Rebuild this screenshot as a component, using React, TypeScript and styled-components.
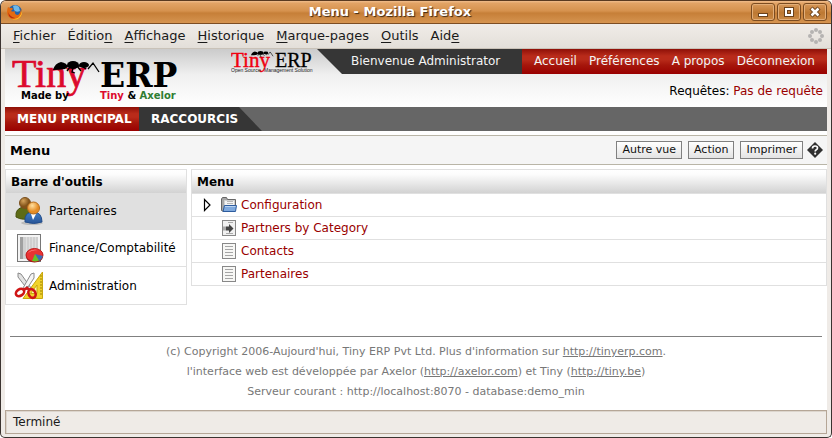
import React from "react";
import styled, { createGlobalStyle } from "styled-components";

const GlobalStyle = createGlobalStyle`
  * { box-sizing: border-box; }
  body { margin: 0; background: #fff; font: 12px "DejaVu Sans", sans-serif; color: #000; }
  button { font: inherit; color: inherit; margin: 0; }
  ul { list-style: none; margin: 0; padding: 0; }
  h1, h2, p { margin: 0; font-size: inherit; }
  svg { display: block; flex: none; }
`;

const redGradient = "linear-gradient(#8e1008 0, #b92b1a 28%, #b92b1a 42%, #a5160b 65%, #990000 100%)";
const panelGradient = "linear-gradient(#fff, #fcfcfc 20%, #d2d2d2)";
const line = "#e0e0e0";

const Window = styled.div`
  display: flex;
  flex-direction: column;
  min-height: 100vh;
  background: #efebe7;
  border: 1px solid #3b3330;
  border-top-color: #5a3a20;
  border-radius: 6px 6px 5px 5px;
  overflow: hidden;
`;
const TitleBar = styled.header`
  display: flex;
  align-items: center;
  height: 23px;
  padding: 0 4px 0 6px;
  color: #fff;
  background: linear-gradient(#f0bd8c 0, #e2a365 10%, #d6924e 45%, #c67f38 55%, #d69450 100%);
  border-bottom: 1px solid #7d4d23;
`;
const Title = styled.h1`
  flex: 1;
  padding-left: 6px;
  text-align: center;
  font-size: 13px;
  line-height: 20px;
  text-shadow: 1px 1px 1px #3d2714;
`;
const WindowButtons = styled.div`
  display: flex;
  gap: 2px;
`;
const WindowButton = styled.button`
  width: 24px;
  height: 18px;
  padding: 0;
  display: grid;
  place-items: center;
  border: 1px solid #7c4c20;
  border-radius: 3px;
  background: linear-gradient(#d8995a, #bd7832 55%, #cb8a47);
  box-shadow: inset 0 0 0 1px #e3ae78;
`;
const MenuBar = styled.nav`
  display: flex;
  align-items: center;
  gap: 12px;
  height: 25px;
  padding: 0 7px 0 12px;
  font-size: 13px;
  color: #1a1a1a;
  background: linear-gradient(#f0ece8, #e3dfd9);
  border-bottom: 1px solid #c9c2b8;
`;
const MenuItem = styled.button`
  border: 0;
  padding: 0;
  background: none;
  line-height: 18px;
  u { text-underline-offset: 2px; }
`;
const Spacer = styled.span`
  flex: 1;
`;
const Page = styled.main`
  flex: 1;
  display: flex;
  flex-direction: column;
  margin: 0 4px;
  background: #fff;
`;
const Banner = styled.header`
  display: flex;
  height: 58px;
  background: linear-gradient(#cbcbcb, #f0f0f0 45%, #fff);
`;
const LogoArea = styled.div`
  flex: 1;
  display: flex;
  justify-content: space-between;
  padding-left: 7px;
`;
const Account = styled.div`
  display: flex;
  flex-direction: column;
`;
const AccountBar = styled.div`
  display: flex;
  height: 25px;
  line-height: 25px;
  color: #f4f4f4;
`;
const Welcome = styled.div`
  width: 205px;
  padding-left: 34px;
  background: #363636;
  clip-path: polygon(0 0, 100% 0, 100% 100%, 25px 100%);
`;
const AccountLinks = styled.nav`
  display: flex;
  justify-content: space-between;
  width: 305px;
  padding: 0 12px;
  background: ${redGradient};
`;
const PlainLink = styled.a<{ $red?: boolean }>`
  color: ${(p) => (p.$red ? "#990000" : "inherit")};
  text-decoration: none;
`;
const Requests = styled.p`
  padding: 9px 4px 0 0;
  line-height: 16px;
  text-align: right;
`;
const TabBar = styled.nav`
  display: flex;
  height: 24px;
  background: #666;
  color: #fff;
  font-weight: bold;
  line-height: 24px;
`;
const Tab = styled.a<{ $active?: boolean }>`
  width: ${(p) => (p.$active ? 134 : 123)}px;
  padding-left: 12px;
  color: inherit;
  text-decoration: none;
  white-space: nowrap;
  background: ${(p) => (p.$active ? redGradient : "#363636")};
  clip-path: ${(p) => (p.$active ? "none" : "polygon(0 0, 100px 0, 100% 100%, 0 100%)")};
`;
const ViewBar = styled.div`
  display: flex;
  align-items: center;
  gap: 6px;
  height: 30px;
  margin: 4px 0;
  padding: 0 4px 0 5px;
  background: #f5f5f5;
  border: solid #b9b5a7;
  border-width: 1px 0;
`;
const ViewTitle = styled.h2`
  flex: 1;
  font-size: 13px;
`;
const ActionButton = styled.button`
  height: 18px;
  padding: 0 5px;
  font-size: 11px;
  line-height: 14px;
  color: #111;
  border: 1px solid #808080;
  background: linear-gradient(#fff, #e3e3e3);
`;
const HelpButton = styled.button`
  border: 0;
  padding: 0;
  margin-left: -2px;
  background: none;
`;
const Columns = styled.div`
  display: flex;
  align-items: flex-start;
  gap: 4px;
`;
const Panel = styled.section<{ $side?: boolean }>`
  ${(p) => (p.$side ? "width: 182px;" : "flex: 1;")}
  border: 1px solid ${line};
`;
const PanelTitle = styled.h2`
  height: 23px;
  padding-left: 5px;
  font-size: 12px;
  line-height: 24px;
  background: ${panelGradient};
`;
const ToolRow = styled.li<{ $selected?: boolean }>`
  height: 37px;
  background: ${(p) => (p.$selected ? "#e0e0e0" : "#fff")};
  border-bottom: 1px solid ${line};
  &:last-child { border-bottom: 0; }
`;
const ToolLink = styled.a`
  display: flex;
  align-items: center;
  gap: 5px;
  height: 100%;
  padding-left: 8px;
  color: #000;
  text-decoration: none;
`;
const TreeRow = styled.li`
  display: flex;
  align-items: center;
  height: 23px;
  padding-left: 9px;
  border-top: 1px solid ${line};
`;
const Expander = styled.span`
  width: 20px;
`;
const ExpandButton = styled.button`
  display: block;
  border: 0;
  padding: 0;
  background: none;
`;
const TreeLink = styled.a`
  display: flex;
  align-items: center;
  gap: 4px;
  color: #990000;
  text-decoration: none;
`;
const Footer = styled.footer`
  margin: 31px 5px 0;
  padding: 5px 0 7px;
  border-top: 1px solid #808080;
  color: #777;
  text-align: center;
  font-size: 11px;
  line-height: 20px;
  a { color: inherit; }
`;
const StatusBar = styled.div`
  height: 24px;
  margin: 0 4px 3px;
  padding-left: 7px;
  font-size: 12px;
  line-height: 22px;
  color: #1a1a1a;
  border: 1px solid #b5a697;
  box-shadow: inset 1px 1px 0 #dcd5cd;
`;

const FirefoxIcon = () => (
  <svg width="16" height="16" viewBox="0 0 16 16">
    <circle cx="8" cy="8" r="7" fill="#2462a6" />
    <path d="M6 2Q9 0 12 3L13 7Q9 9 7 6Z" fill="#6fb8e8" />
    <path d="M1 3L3 4Q5 3 6 5L4 7Q6 8 8 7Q7 10 10 11Q13 11 14 5Q17 12 11 15Q5 17 1 12Q-1 8 1 3Z" fill="#e46a10" />
    <path d="M12 13Q15 10 15 6Q16 12 11 15Q8 16 5 15Q10 15 12 13Z" fill="#ffc52e" />
    <path d="M1 8Q3 13 8 14Q4 15 2 12Z" fill="#b42a10" />
  </svg>
);

const Throbber = () => (
  <svg width="16" height="16" viewBox="0 0 16 16" fill="#b5b3b1">
    <circle cx="8" cy="2" r="2" />
    <circle cx="12" cy="4" r="2" />
    <circle cx="14" cy="8" r="2" />
    <circle cx="12" cy="12" r="2" />
    <circle cx="8" cy="14" r="2" />
    <circle cx="4" cy="12" r="2" />
    <circle cx="2" cy="8" r="2" />
    <circle cx="4" cy="4" r="2" />
  </svg>
);

const Ant = () => (
  <g>
    <path d="M0 9Q2 2 8 1Q14 2 15 6L12 8Q6 9 0 9Z" />
    <ellipse cx="20" cy="4" rx="6" ry="4" />
    <ellipse cx="31" cy="4" rx="5" ry="3" />
    <path d="M13 5H34M35 8L40 2L46 11M17 6L14 10M20 7L19 11L22 12M24 5L28 10M30 6L33 8" fill="none" stroke="#000" strokeWidth="1.3" />
  </g>
);

const MainLogo = () => (
  <svg width="172" height="54" viewBox="0 0 172 54" role="img" aria-label="Tiny ERP">
    <text x="0" y="38" fontFamily="Liberation Serif, serif" fontSize="40" fill="#dc0a2d" stroke="#dc0a2d" strokeWidth="0.7">Tiny</text>
    <text x="88" y="38" fontFamily="DejaVu Serif, serif" fontSize="33" fontWeight="bold">ERP</text>
    <g transform="translate(41 12)"><Ant /></g>
    <g fontSize="10" fontWeight="bold">
      <text x="9" y="50">Made by</text>
      <text x="88" y="50" fill="#dc0a2d">Tiny <tspan fill="#000">&amp;</tspan> <tspan fill="#2f7d32">Axelor</tspan></text>
    </g>
  </svg>
);

const SmallLogo = () => (
  <svg width="86" height="25" viewBox="0 0 86 25" role="img" aria-label="Tiny ERP">
    <text x="0" y="18" fontFamily="Liberation Serif, serif" fontSize="21" fill="#f00010" stroke="#f00010" strokeWidth="0.4">Tiny</text>
    <text x="44" y="18" fontFamily="Liberation Serif, serif" fontSize="20" stroke="#000" strokeWidth="0.3">ERP</text>
    <g transform="translate(20 2) scale(0.48)"><Ant /></g>
    <g fontFamily="Liberation Sans, sans-serif" fontSize="5" fill="#222">
      <text x="0" y="23">Open Source</text>
      <text x="33" y="23">Management Solution</text>
    </g>
  </svg>
);

const MinimizeIcon = () => (
  <svg width="12" height="12"><rect x="1" y="7" width="10" height="4" fill="#6b421c" /><rect x="2" y="8" width="8" height="2" fill="#fff" /></svg>
);
const MaximizeIcon = () => (
  <svg width="12" height="12" fill="none"><rect x="3" y="3" width="6" height="6" stroke="#6b421c" strokeWidth="4" /><rect x="3" y="3" width="6" height="6" stroke="#fff" strokeWidth="2" /></svg>
);
const CloseIcon = () => (
  <svg width="12" height="12" fill="none"><path d="M2 2L10 10M10 2L2 10" stroke="#6b421c" strokeWidth="4.5" /><path d="M2.5 2.5L9.5 9.5M9.5 2.5L2.5 9.5" stroke="#fff" strokeWidth="2.5" /></svg>
);

const HelpIcon = () => (
  <svg width="16" height="16" viewBox="0 0 16 16">
    <path d="M8 0L16 8L8 16L0 8Z" fill="#303030" />
    <path d="M5.5 6.5Q5.5 4 8 4Q10.5 4 10.5 6Q10.5 7.2 9 8Q8.2 8.5 8.2 9.5" fill="none" stroke="#fff" strokeWidth="1.7" />
    <circle cx="8.2" cy="11.7" r="1.1" fill="#fff" />
  </svg>
);

const PeopleIcon = () => (
  <svg width="30" height="30" viewBox="0 0 30 30">
    <defs>
      <radialGradient id="brownHead" cx="35%" cy="30%"><stop offset="0" stopColor="#d5a45c" /><stop offset="1" stopColor="#835319" /></radialGradient>
      <radialGradient id="blondHead" cx="40%" cy="30%"><stop offset="0" stopColor="#ffe0a0" /><stop offset="1" stopColor="#e58d25" /></radialGradient>
      <linearGradient id="blueCoat" x2="0" y2="1"><stop offset="0" stopColor="#3f7fca" /><stop offset="1" stopColor="#285496" /></linearGradient>
    </defs>
    <ellipse cx="18" cy="27" rx="11" ry="2" fill="#bbb" />
    <path d="M2 21Q1 12 10 11Q18 12 18 22Q9 25 2 21Z" fill="#5d6b16" stroke="#46500c" />
    <circle cx="11" cy="7" r="5.5" fill="url(#brownHead)" stroke="#7b501e" />
    <path d="M11 26Q10 16 19 16Q28 16 28 26Q20 29 11 26Z" fill="url(#blueCoat)" stroke="#234d8a" />
    <path d="M17 18L19 24L22 18Z" fill="#fff" />
    <circle cx="19.5" cy="12" r="6" fill="url(#blondHead)" stroke="#b76d1c" />
  </svg>
);

const FinanceIcon = () => (
  <svg width="30" height="30" viewBox="0 0 30 30">
    <rect x="3.5" y="1.5" width="23" height="27" fill="#f4f4f4" stroke="#777" />
    <rect x="6" y="4" width="18" height="22" fill="#cfcfcf" />
    <rect x="6" y="4" width="3" height="22" fill="#a0a0a0" />
    <path d="M12.500 4V26M15.500 4V26M18.500 4V18M21.500 4V18" stroke="#dedede" />
    <ellipse cx="20.500" cy="23.500" rx="8.500" ry="6" fill="#8c1212" />
    <ellipse cx="20.500" cy="22" rx="8.500" ry="6.500" fill="#e93333" stroke="#c01b1b" />
    <path d="M21 21L29 23Q28 26 25 28Z" fill="#3c6eb4" />
    <path d="M21 21L25 27.500Q22 29 18 28Z" fill="#65c32a" />
    <path d="M14 20Q17 16 24 17Q17 17 14 20Z" fill="#ff9a9a" />
  </svg>
);

const ToolsIcon = () => (
  <svg width="30" height="30" viewBox="0 0 30 30">
    <path d="M28.500 1V27.500H9Z" fill="#f1d32b" stroke="#c8a70e" />
    <path d="M23 14V22.500H16.500Z" fill="#fff6b0" stroke="#c8a70e" />
    <path d="M26 5H28M26 8H28M26 11H28M26 14H28M26 17H28M26 20H28M26 23H28" stroke="#9b8107" />
    <path d="M4 2L7 3L17 17L14 19L4 6Z" fill="#e3e3e3" stroke="#8a8a8a" />
    <path d="M20 2L17 3L9 17L12 19L20 7Z" fill="#f5f5f5" stroke="#8a8a8a" />
    <circle cx="13" cy="16" r="1" fill="#666" />
    <g fill="none" stroke="#cf1616" strokeWidth="2.600">
      <ellipse cx="6" cy="21.500" rx="4.500" ry="3.200" transform="rotate(-35 6 21.500)" />
      <ellipse cx="18" cy="22.500" rx="3.400" ry="4.500" transform="rotate(-25 18 22.500)" />
      <path d="M9 19L13 17L16 19" />
    </g>
  </svg>
);

const FolderIcon = () => (
  <svg width="16" height="16" viewBox="0 0 16 16">
    <path d="M.5 13.500V2L1.500.5H5.500L6.500 2.500H14.500V12H2.500V14.500Z" fill="#a7a7a7" stroke="#666" />
    <path d="M3.500 12V3.500H13.500V10" fill="#f3f3f3" stroke="#d0d0d0" />
    <path d="M6 4.500H12M6 6.500H12" stroke="#b6b6b6" />
    <path d="M3.500 8.500H15.500L14.500 14.500H2Z" fill="#7fa9dd" stroke="#2d5c9e" />
    <path d="M4 9.500H14.500" stroke="#b9d2f1" />
  </svg>
);
const ArrowPageIcon = () => (
  <svg width="16" height="16" viewBox="0 0 16 16">
    <rect x="1.500" y=".5" width="13" height="15" fill="#f1f1f1" stroke="#888" />
    <path d="M7 2.500H12M5 13.500H12" stroke="#aaa" />
    <path d="M5 6.500H8V4L12.500 8.500L8 13V10.500H5Z" fill="#444" />
    <path d="M2 6.500H5V10.500H2Z" fill="#aaa" />
  </svg>
);
const PageIcon = () => (
  <svg width="16" height="16" viewBox="0 0 16 16">
    <rect x="1.500" y=".5" width="13" height="15" fill="#f7f7f5" stroke="#888" />
    <path d="M4 3.500H12M4 6.500H12M4 9.500H12M4 12.500H12" stroke="#a5a5a5" />
  </svg>
);
const TriangleIcon = () => (
  <svg width="14" height="14" viewBox="0 0 14 14"><path d="M3.500 1.500V12.500L9 7Z" fill="#fff" stroke="#000" strokeWidth="1.200" /></svg>
);

const menus = [
  ["", "F", "ichier"],
  ["Éditio", "n", ""],
  ["", "A", "ffichage"],
  ["", "H", "istorique"],
  ["", "M", "arque-pages"],
  ["", "O", "utils"],
  ["Aid", "e", ""],
];
const accountLinks = ["Accueil", "Préférences", "A propos", "Déconnexion"];
const tools = [
  { label: "Partenaires", icon: <PeopleIcon />, selected: true },
  { label: "Finance/Comptabilité", icon: <FinanceIcon />, selected: false },
  { label: "Administration", icon: <ToolsIcon />, selected: false },
];
const tree = [
  { label: "Configuration", icon: <FolderIcon />, expandable: true },
  { label: "Partners by Category", icon: <ArrowPageIcon />, expandable: false },
  { label: "Contacts", icon: <PageIcon />, expandable: false },
  { label: "Partenaires", icon: <PageIcon />, expandable: false },
];

export default function App() {
  return (
    <>
      <GlobalStyle />
      <Window>
        <TitleBar>
          <FirefoxIcon />
          <Title>Menu - Mozilla Firefox</Title>
          <WindowButtons>
            <WindowButton aria-label="Réduire"><MinimizeIcon /></WindowButton>
            <WindowButton aria-label="Agrandir"><MaximizeIcon /></WindowButton>
            <WindowButton aria-label="Fermer"><CloseIcon /></WindowButton>
          </WindowButtons>
        </TitleBar>
        <MenuBar>
          {menus.map(([before, key, after]) => (
            <MenuItem key={before + key + after}>{before}<u>{key}</u>{after}</MenuItem>
          ))}
          <Spacer />
          <Throbber />
        </MenuBar>
        <Page>
          <Banner>
            <LogoArea>
              <MainLogo />
              <SmallLogo />
            </LogoArea>
            <Account>
              <AccountBar>
                <Welcome>Bienvenue Administrator</Welcome>
                <AccountLinks>
                  {accountLinks.map((label) => <PlainLink href="#" key={label}>{label}</PlainLink>)}
                </AccountLinks>
              </AccountBar>
              <Requests>Requêtes: <PlainLink href="#" $red>Pas de requête</PlainLink></Requests>
            </Account>
          </Banner>
          <TabBar>
            <Tab href="#" $active>MENU PRINCIPAL</Tab>
            <Tab href="#">RACCOURCIS</Tab>
          </TabBar>
          <ViewBar>
            <ViewTitle>Menu</ViewTitle>
            <ActionButton>Autre vue</ActionButton>
            <ActionButton>Action</ActionButton>
            <ActionButton>Imprimer</ActionButton>
            <HelpButton aria-label="Aide"><HelpIcon /></HelpButton>
          </ViewBar>
          <Columns>
            <Panel $side>
              <PanelTitle>Barre d'outils</PanelTitle>
              <ul>
                {tools.map((t) => (
                  <ToolRow key={t.label} $selected={t.selected}>
                    <ToolLink href="#">{t.icon}{t.label}</ToolLink>
                  </ToolRow>
                ))}
              </ul>
            </Panel>
            <Panel>
              <PanelTitle>Menu</PanelTitle>
              <ul>
                {tree.map((n) => (
                  <TreeRow key={n.label}>
                    <Expander>
                      {n.expandable && <ExpandButton aria-label="Développer"><TriangleIcon /></ExpandButton>}
                    </Expander>
                    <TreeLink href="#">{n.icon}{n.label}</TreeLink>
                  </TreeRow>
                ))}
              </ul>
            </Panel>
          </Columns>
          <Footer>
            <p>(c) Copyright 2006-Aujourd'hui, Tiny ERP Pvt Ltd. Plus d'information sur <a href="#">http://tinyerp.com</a>.</p>
            <p>l'interface web est développée par Axelor (<a href="#">http://axelor.com</a>) et Tiny (<a href="#">http://tiny.be</a>)</p>
            <p>Serveur courant : http://localhost:8070 - database:demo_min</p>
          </Footer>
        </Page>
        <StatusBar role="status">Terminé</StatusBar>
      </Window>
    </>
  );
}
